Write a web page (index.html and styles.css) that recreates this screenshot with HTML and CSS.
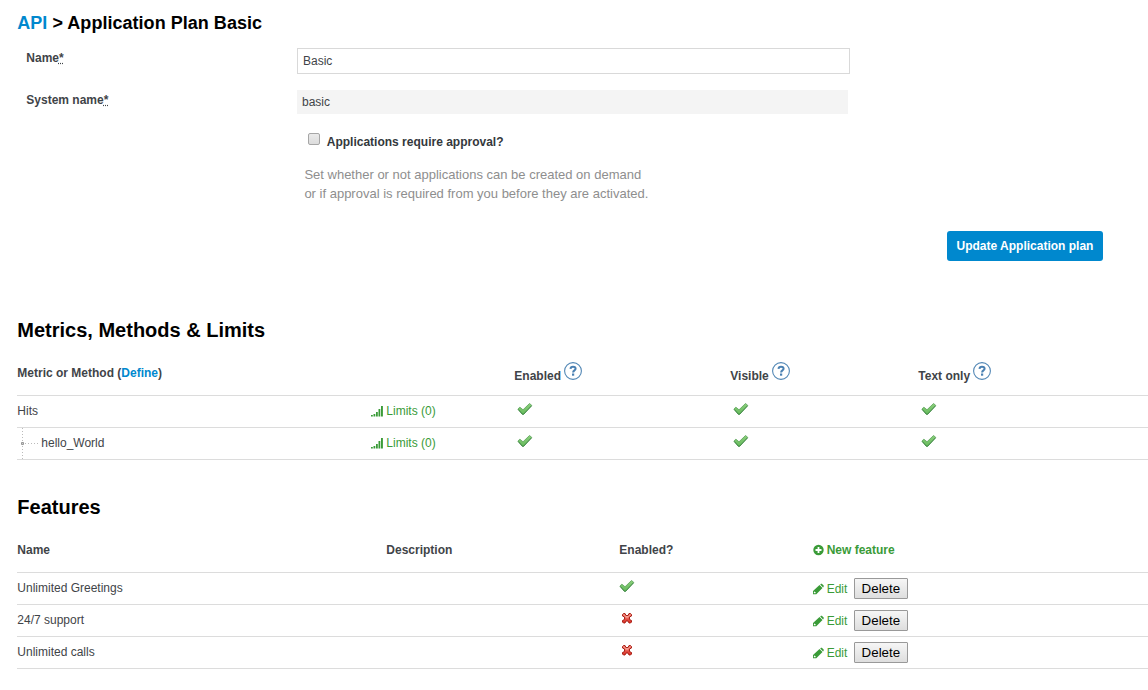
FILE: index.html
```html
<!DOCTYPE html>
<html lang="en">
<head>
<meta charset="utf-8">
<title>Application Plan Basic</title>
<link rel="stylesheet" href="styles.css">
</head>
<body>
<svg class="defs" width="0" height="0" aria-hidden="true">
  <defs>
    <linearGradient id="green" x1="0" y1="0" x2="0" y2="1"><stop offset="0" stop-color="#8bce7b"/><stop offset="1" stop-color="#66bb5c"/></linearGradient>
    <linearGradient id="red" x1="0" y1="0" x2="0" y2="1"><stop offset="0" stop-color="#ee8074"/><stop offset="1" stop-color="#dc2e24"/></linearGradient>
    <symbol id="tick" viewBox="0 0 16 16"><path d="M.9 8 2.900 6.200 6 8.800 12.500 2.500 14.700 4.300 6.500 13.300H5.500Z" fill="url(#green)" stroke="#5aa259" stroke-width=".8" stroke-linejoin="round"/><path d="M1.200 8.500 5.500 13.300H6.500L14.700 4.800" fill="none" stroke="#2f7d35" stroke-width=".9"/></symbol>
    <symbol id="cross" viewBox="0 0 16 16"><path d="M3.500 4.500 4.500 3.500H6L7 5.500H9L10 3.500h1.500l1 1V6L10.500 7V9.500L12.500 10.500v1.500l-1 1H10L9 11H7L6 13H4.500l-1-1V10.500L5.500 9.500V7L3.500 6Z" fill="url(#red)" stroke="#a92017" stroke-width="1" stroke-linejoin="round"/><path d="M4.800 4.900 6.400 6.500H9.600L11.200 4.900M6.500 7.700h3" fill="none" stroke="#f7aca0" stroke-width=".8"/></symbol>
    <symbol id="help" viewBox="0 0 18 18"><circle cx="9" cy="9" r="8.400" fill="#fff" stroke="#5287b5" stroke-width="1.100"/><path d="M6.500 6.900C6.600 5.300 7.600 4.700 9 4.700c1.500 0 2.600.7 2.600 2C11.600 8.400 9.100 8.300 9.100 10.400" fill="none" stroke="#4a80b2" stroke-width="2"/><path d="M8 11.500h2.200v2.200H8z" fill="#4a80b2"/></symbol>
    <symbol id="signal" viewBox="0 0 12 11"><path d="M0 9h1.800v1.500H0zM2.500 8h1.800v2.500h-1.800zM5 6h1.800v4.500H5zM7.500 3h1.800v7.500h-1.800zM10 0h1.900v10.500H10z" fill="#3a9b38"/></symbol>
    <symbol id="plus" viewBox="0 0 12 12"><path fill-rule="evenodd" d="M5.500 .8a5.200 5.200 0 1 0 0 10.400A5.200 5.200 0 0 0 5.500 .8ZM4.600 3h1.800v2.100H8.500v1.800H6.400V9H4.600V6.900H2.500V5.100h2.100Z" fill="#3a9b38"/></symbol>
    <symbol id="pencil" viewBox="0 0 12 12"><path fill-rule="evenodd" d="M0 7.900 6.500 2 9.500 5 3.300 11.200H0ZM.9 8.900v1.400h1.500l.5-.5-1.400-1.400ZM7.200 1.400 8 .7h.8L10.700 2.600v.9l-.6.9Z" fill="#3a9b38"/></symbol>
  </defs>
</svg>
<main class="page">
  <h1 class="title"><a class="link" href="#">API</a> &gt; Application Plan Basic</h1>
  <form class="form">
    <div class="field">
      <label class="label" for="name">Name<abbr class="required" title="required">*</abbr></label>
      <input class="input" id="name" type="text" value="Basic">
    </div>
    <div class="field field-system">
      <span class="label">System name<abbr class="required" title="required">*</abbr></span>
      <div class="readonly">basic</div>
    </div>
    <label class="approval"><input class="checkbox" type="checkbox"><span class="approval-text">Applications require approval?</span></label>
    <p class="hint">Set whether or not applications can be created on demand<br>or if approval is required from you before they are activated.</p>
    <div class="actions"><button class="submit" type="button">Update Application plan</button></div>
  </form>

  <section class="section metrics">
    <h2 class="heading">Metrics, Methods &amp; Limits</h2>
    <div class="row head">
      <div class="cell">Metric or Method (<a class="link" href="#">Define</a>)</div>
      <div></div>
      <div class="cell helped">Enabled<svg class="help"><use href="#help"/></svg></div>
      <div class="cell helped">Visible<svg class="help"><use href="#help"/></svg></div>
      <div class="cell helped">Text only<svg class="help"><use href="#help"/></svg></div>
    </div>
    <div class="row">
      <div class="cell">Hits</div>
      <div class="cell"><a class="action" href="#"><svg class="signal"><use href="#signal"/></svg>Limits (0)</a></div>
      <div class="status"><svg class="mark"><use href="#tick"/></svg></div>
      <div class="status"><svg class="mark"><use href="#tick"/></svg></div>
      <div class="status"><svg class="mark"><use href="#tick"/></svg></div>
    </div>
    <div class="row">
      <div class="cell child"><svg class="branch" viewBox="0 0 24 31"><path d="M5.500 0V31M8 15.500H22" stroke="#bbb" stroke-dasharray="1 2" fill="none"/><path d="M4.500 14.500h2v2h-2z" fill="#ccc" stroke="#999"/></svg>hello_World</div>
      <div class="cell"><a class="action" href="#"><svg class="signal"><use href="#signal"/></svg>Limits (0)</a></div>
      <div class="status"><svg class="mark"><use href="#tick"/></svg></div>
      <div class="status"><svg class="mark"><use href="#tick"/></svg></div>
      <div class="status"><svg class="mark"><use href="#tick"/></svg></div>
    </div>
  </section>

  <section class="section features">
    <h2 class="heading">Features</h2>
    <div class="row head">
      <div class="cell">Name</div>
      <div class="cell">Description</div>
      <div class="cell">Enabled?</div>
      <div class="cell"><a class="action" href="#"><svg class="glyph"><use href="#plus"/></svg>New feature</a></div>
    </div>
    <div class="row">
      <div class="cell">Unlimited Greetings</div>
      <div></div>
      <div class="status"><svg class="mark"><use href="#tick"/></svg></div>
      <div class="cell tools"><a class="action" href="#"><svg class="glyph"><use href="#pencil"/></svg>Edit</a><button class="delete" type="button">Delete</button></div>
    </div>
    <div class="row">
      <div class="cell">24/7 support</div>
      <div></div>
      <div class="status"><svg class="mark"><use href="#cross"/></svg></div>
      <div class="cell tools"><a class="action" href="#"><svg class="glyph"><use href="#pencil"/></svg>Edit</a><button class="delete" type="button">Delete</button></div>
    </div>
    <div class="row">
      <div class="cell">Unlimited calls</div>
      <div></div>
      <div class="status"><svg class="mark"><use href="#cross"/></svg></div>
      <div class="cell tools"><a class="action" href="#"><svg class="glyph"><use href="#pencil"/></svg>Edit</a><button class="delete" type="button">Delete</button></div>
    </div>
  </section>
</main>
</body>
</html>
```

FILE: styles.css
```css
* { box-sizing: border-box; }
body {
  margin: 0;
  background: #fff;
  color: #3f4448;
  font: 12px/16px "Liberation Sans", Arial, sans-serif;
}
.defs { display: block; height: 0; }
.page { padding: 12px 0 0 17.3px; }
.title { margin: 0; font-size: 18px; line-height: 22px; letter-spacing: .03px; color: #000; }
.link { color: #0088ce; text-decoration: none; }

.form { height: 284px; padding-top: 14px; }
.field { display: grid; grid-template-columns: 271px 553px; padding-left: 9px; height: 42px; }
.label { font-weight: bold; padding-top: 2px; }
.required { text-decoration: underline dotted; }
.input {
  height: 26px;
  padding: 0 4.700px;
  border: 1px solid #d9d9d9;
  background: #fff;
  color: #3f4448;
  font: inherit;
}
.readonly { width: 551px; height: 24px; padding: 4px 4.700px; background: #f4f4f4; }
.approval { display: flex; align-items: flex-start; margin-left: 290.7px; height: 33px; font-weight: bold; color: #33383c; }
.checkbox {
  appearance: none;
  width: 12px;
  height: 12px;
  margin: 1px 6.800px 0 0;
  border: 1px solid #a6a6a6;
  border-radius: 2px;
  background: linear-gradient(#eaeaea, #dcdcdc);
}
.approval-text { padding-top: 2px; }
.hint { margin: 0 0 0 287.100px; font-size: 13px; line-height: 19px; color: #8e8e8e; }
.actions { display: flex; justify-content: flex-end; padding: 28px 45px 0 0; }
.submit {
  width: 156px;
  height: 30px;
  padding: 0;
  border: 0;
  border-radius: 3px;
  background: #0088ce;
  color: #fff;
  font: bold 12px "Liberation Sans", Arial, sans-serif;
}

.heading { margin: 0; font-size: 20px; line-height: 24px; color: #000; }
.row { display: grid; height: 32px; border-bottom: 1px solid #dcdcdc; }
.head { height: 54px; font-weight: bold; }
.metrics .row { grid-template-columns: 354px 143px 216px 188px 1fr; }
.features { padding-top: 35px; }
.features .row { grid-template-columns: 369px 233px 193.700px 1fr; }
.cell { padding-top: 7px; }
.head .cell { padding-top: 23px; }
.head .helped { display: flex; padding-top: 20px; line-height: 28px; }
.help { width: 18px; height: 18px; margin-left: 3px; }
.action { display: inline-flex; align-items: center; color: #3a9b38; text-decoration: none; }
.signal { width: 12px; height: 11px; margin-right: 3px; }
.glyph { width: 12px; height: 12px; margin-right: 1.700px; }
.mark { display: block; width: 16px; height: 16px; }
.status { padding-top: 5px; }
.metrics .status { padding-left: 3px; }
.child { display: flex; padding: 0; line-height: 31px; }
.branch { width: 24px; height: 31px; }
.tools { display: flex; align-items: flex-start; gap: 6.500px; padding-top: 5px; }
.tools .action { padding-top: 3px; }
.delete {
  width: 54px;
  height: 21px;
  padding: 0;
  border: 1px solid #999;
  border-radius: 1px;
  background: linear-gradient(#f6f6f6, #dedede);
  color: #000;
  font: 13.333px "Liberation Sans", Arial, sans-serif;
}
```
